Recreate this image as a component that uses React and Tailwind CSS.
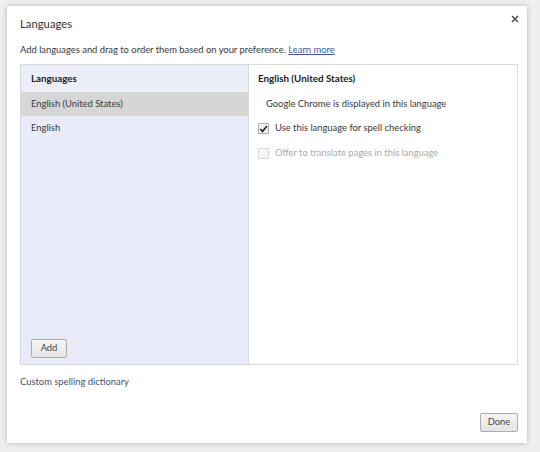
import { useState } from 'react'

const font = { fontFamily: 'Lato, "Liberation Sans", sans-serif' }

const Checkbox = ({ checked, disabled }) => (
    <span
        className={`flex items-center justify-center w-[11px] h-[11px] border rounded-[1px] ${
            disabled ? 'border-[#d6d6d6] bg-[#f7f7f7]' : 'border-[#a9a9a9] bg-[#f4f4f4]'
        }`}
    >
        {checked && (
            <svg width="10" height="10" viewBox="0 0 10 10">
                <path d="M1.5 5.2 L4 7.8 L8.8 1.6" fill="none" stroke="#222" strokeWidth="1.8" />
            </svg>
        )}
    </span>
)

export default function App() {
    const [selected, setSelected] = useState(0)
    const [spell, setSpell] = useState(true)
    const languages = ['English (United States)', 'English']

    return (
        <div className="w-[540px] h-[452px] bg-[#efefef] pt-[6px] pl-[7px]" style={font}>
            <div className="relative w-[520px] h-[437px] bg-white shadow-[0_0_5px_rgba(0,0,0,0.25)] px-[13px] pt-[10px] text-[#3a3a3a] text-[9.4px]">
                {/* close */}
                <button className="absolute right-[5px] top-[6px] w-[14px] h-[14px] flex items-center justify-center">
                    <svg width="8" height="8" viewBox="0 0 8 8">
                        <path d="M1 1 L7 7 M7 1 L1 7" stroke="#444" strokeWidth="1.4" />
                    </svg>
                </button>

                <h1 className="text-[11.3px] leading-[16px] text-[#333]">Languages</h1>
                <p className="mt-[10px] leading-[15px]">
                    Add languages and drag to order them based on your preference.{' '}
                    <a className="text-[#3c5a9a] underline">Learn more</a>
                </p>

                {/* Table */}
                <div className="mt-[7px] flex h-[301px] w-[498px] border border-[#d9d9d9]">
                    <div className="w-[228px] flex flex-col bg-[#e9ecf8] border-r border-[#d9d9d9]">
                        <div className="h-[27px] flex items-center pl-[10px] font-bold text-[9.8px] bg-[#eceff9] text-[#222]">Languages</div>
                        {languages.map((l, i) => (
                            <div
                                key={l}
                                onClick={() => setSelected(i)}
                                className={`flex items-center pl-[10px] ${i === selected ? 'bg-[#d6d6d6]' : ''} ${i === 1 ? 'h-[25px]' : 'h-[24px]'}`}
                            >
                                {l}
                            </div>
                        ))}
                        <div className="flex-1" />
                        <div className="pl-[10px] pb-[6px]">
                            <button className="w-[36px] h-[19px] border border-[#acacac] rounded-[2px] bg-gradient-to-b from-[#f6f6f6] to-[#e4e4e4] text-[9.4px] text-[#444]">Add</button>
                        </div>
                    </div>
                    <div className="flex-1 bg-white pl-[9px]">
                        <div className="h-[27px] flex items-center font-bold text-[9.8px] text-[#222]">English (United States)</div>
                        <div className="h-[24px] flex items-center pl-[8px]">Google Chrome is displayed in this language</div>
                        <label className="h-[25px] flex items-center gap-[6px]" onClick={() => setSpell(!spell)}>
                            <Checkbox checked={spell} />
                            <span>Use this language for spell checking</span>
                        </label>
                        <label className="h-[25px] flex items-center gap-[6px] text-[#aaa]">
                            <Checkbox disabled />
                            <span>Offer to translate pages in this language</span>
                        </label>
                    </div>
                </div>

                <a className="block mt-[9px] leading-[15px] text-[#4a5470]">Custom spelling dictionary</a>

                <div className="absolute right-[9px] bottom-[11px]">
                    <button className="w-[38px] h-[19px] border border-[#acacac] rounded-[2px] bg-gradient-to-b from-[#f6f6f6] to-[#e4e4e4] text-[9.4px] text-[#444]">Done</button>
                </div>
            </div>
        </div>
    )
}
